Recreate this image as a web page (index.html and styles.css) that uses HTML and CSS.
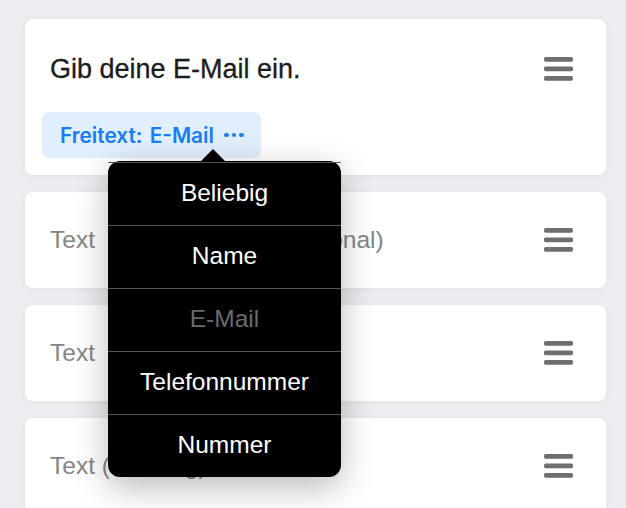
FILE: index.html
```html
<!DOCTYPE html>
<html lang="de">
<head>
  <meta charset="UTF-8" />
  <meta name="viewport" content="width=device-width, initial-scale=1.0"/>
  <title>Formular bearbeiten</title>
  <link rel="stylesheet" href="styles.css">
</head>
<body>
  <div class="list">

    <div class="card card-main">
      <div class="card-head">
        <div class="title">Gib deine E-Mail ein.</div>
        <svg class="handle" width="29" height="24" viewBox="0 0 29 24">
          <rect x="0" y="0" width="29" height="4.7" rx="1.6"/>
          <rect x="0" y="9.5" width="29" height="4.7" rx="1.6"/>
          <rect x="0" y="19" width="29" height="4.7" rx="1.6"/>
        </svg>
      </div>
      <div class="chip-wrap">
        <span class="chip">Freitext: E-Mail <span class="dots"><i></i><i></i><i></i></span></span>

        <div class="popover">
          <div class="popover-arrow"></div>
          <div class="popover-item">Beliebig</div>
          <div class="popover-item">Name</div>
          <div class="popover-item disabled">E-Mail</div>
          <div class="popover-item">Telefonnummer</div>
          <div class="popover-item">Nummer</div>
        </div>
      </div>
    </div>

    <div class="card">
      <div class="placeholder">Text&nbsp; mit Erläuterung (optional)</div>
      <svg class="handle" width="29" height="24" viewBox="0 0 29 24">
        <rect x="0" y="0" width="29" height="4.7" rx="1.6"/>
        <rect x="0" y="9.5" width="29" height="4.7" rx="1.6"/>
        <rect x="0" y="19" width="29" height="4.7" rx="1.6"/>
      </svg>
    </div>

    <div class="card">
      <div class="placeholder">Text</div>
      <svg class="handle" width="29" height="24" viewBox="0 0 29 24">
        <rect x="0" y="0" width="29" height="4.7" rx="1.6"/>
        <rect x="0" y="9.5" width="29" height="4.7" rx="1.6"/>
        <rect x="0" y="19" width="29" height="4.7" rx="1.6"/>
      </svg>
    </div>

    <div class="card">
      <div class="placeholder">Text (einzeilig)</div>
      <svg class="handle" width="29" height="24" viewBox="0 0 29 24">
        <rect x="0" y="0" width="29" height="4.7" rx="1.6"/>
        <rect x="0" y="9.5" width="29" height="4.7" rx="1.6"/>
        <rect x="0" y="19" width="29" height="4.7" rx="1.6"/>
      </svg>
    </div>

  </div>
</body>
</html>
```

FILE: styles.css
```css
body {
  font-family: "Liberation Sans", Arial, sans-serif;
  margin: 0;
  padding: 0;
  background: #ececf1;
  overflow: hidden;
}
.list {
  display: flex;
  flex-direction: column;
  gap: 17px;
  padding: 19px 20px 0 25px;
}
.card {
  background: #fff;
  border-radius: 8px;
  box-shadow: 0 1px 6px rgba(0,0,0,0.05);
  height: 96px;
  box-sizing: border-box;
  padding: 0 33px 0 25px;
  display: flex;
  align-items: center;
  justify-content: space-between;
}
.card-main {
  height: 156px;
  display: block;
  padding: 26px 33px 0 17px;
}
.card-head {
  display: flex;
  align-items: center;
  justify-content: space-between;
  height: 48px;
  padding-left: 8px;
}
.title {
  font-size: 27px;
  color: #1c1c1e;
  -webkit-text-stroke: 0.3px #1c1c1e;
}
.handle {
  fill: #6e6e73;
  flex-shrink: 0;
}
.placeholder {
  font-size: 24.5px;
  color: #858587;
  white-space: nowrap;
}
.chip-wrap {
  position: relative;
  margin-top: 19px;
}
.chip {
  display: inline-flex;
  align-items: center;
  height: 46px;
  padding: 0 17px 0 18px;
  background: #e1eefd;
  border-radius: 7px;
  color: #167df6;
  font-family: Inter, "Liberation Sans", sans-serif;
  font-weight: 600;
  font-size: 20.8px;
  word-spacing: 2px;
  white-space: pre;
}
.dots {
  display: inline-flex;
  gap: 2.6px;
  margin-left: 3px;
}
.dots i {
  width: 4.8px;
  height: 4.8px;
  border-radius: 50%;
  background: #167df6;
}
.popover {
  position: absolute;
  left: 66px;
  top: 49px;
  width: 233px;
  height: 316px;
  box-sizing: border-box;
  padding-top: 1px;
  background: #000;
  border-radius: 12px;
  box-shadow: 0 10px 34px rgba(0,0,0,0.28);
  display: flex;
  flex-direction: column;
  z-index: 10;
}
.popover-arrow {
  position: absolute;
  left: 93px;
  top: -12px;
  width: 0;
  height: 0;
  border-left: 12.5px solid transparent;
  border-right: 12.5px solid transparent;
  border-bottom: 12px solid #000;
}
.popover-item {
  flex: 1;
  display: flex;
  align-items: center;
  justify-content: center;
  color: #fff;
  font-size: 24.5px;
  padding-bottom: 3px;
  border-top: 1px solid #545456;
}
.popover-item:first-of-type {
  border-top: none;
}
.popover-item.disabled {
  color: #6b6b6d;
}
```
